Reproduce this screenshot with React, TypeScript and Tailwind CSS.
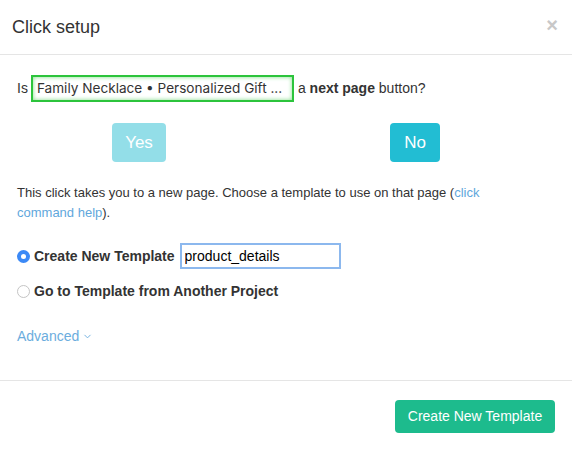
import { ChevronDown } from 'lucide-react';

const font = { fontFamily: '"Liberation Sans", Arial, sans-serif' };

function Radio({ checked }: { checked: boolean }) {
  return checked ? (
    <span className="flex h-[13px] w-[13px] items-center justify-center rounded-full bg-[#3b89f6]">
      <span className="h-[5px] w-[5px] rounded-full bg-white" />
    </span>
  ) : (
    <span className="h-[13px] w-[13px] rounded-full border border-[#c4c4c4] bg-white" />
  );
}

export default function App() {
  return (
    <div className="h-[450px] w-[572px] bg-white text-[14px] text-[#333]" style={font}>
      {/* Header */}
      <div className="flex h-[55px] items-center justify-between border-b border-[#e5e5e5] pl-3 pr-[14px]">
        <h2 className="text-[18px] leading-none text-[#333]">Click setup</h2>
        <span className="-mt-[5px] text-[20px] font-bold leading-none text-[#c8c8c8]">×</span>
      </div>

      {/* Body */}
      <div className="px-[17px] pb-[34px]">
        <div className="mt-[20px] flex h-[27px] items-center">
          <span>Is</span>
          <span
            className="ml-[3px] flex h-[27px] w-[263px] items-center overflow-hidden whitespace-nowrap border-2 border-[#2cc43c] px-[4px] text-[13.6px] text-[#333] shadow-[inset_0_0_4px_#7fdc86]"
            style={{ fontFamily: 'Inter, "Liberation Sans", sans-serif' }}
          >
            Family Necklace • Personalized Gift ...
          </span>
          <span className="ml-[4px]">
            a <b>next page</b> button?
          </span>
        </div>

        <div className="mt-[21px] flex h-[39px]">
          <button className="ml-[95px] h-[39px] w-[54px] rounded-[4px] bg-[#93dee8] text-[17px] text-white">Yes</button>
          <button className="ml-[224px] h-[39px] w-[50px] rounded-[4px] bg-[#22bdd3] text-[17px] text-white">No</button>
        </div>

        <p className="mt-[21px] w-[500px] text-[13px] leading-5">
          This click takes you to a new page. Choose a template to use on that page (
          <a className="text-[#5fa7dc]">click command help</a>).
        </p>

        <div className="mt-[20px] flex h-[26px] items-center">
          <Radio checked />
          <span className="ml-[4px] font-bold">Create New Template</span>
          <input
            readOnly
            value="product_details"
            className="ml-[5px] h-[26px] w-[161px] border-2 border-[#8cb8ee] px-[3px] text-[14px] text-black outline-none"
          />
        </div>

        <div className="mt-[12px] flex h-[20px] items-center">
          <Radio checked={false} />
          <span className="ml-[4px] font-bold">Go to Template from Another Project</span>
        </div>

        <div className="mt-[25px] flex h-[20px] items-center text-[#6badde]">
          <span>Advanced</span>
          <ChevronDown size={11} className="ml-[3px] mt-[1px]" strokeWidth={2} />
        </div>
      </div>

      {/* Footer */}
      <div className="flex justify-end border-t border-[#e5e5e5] pr-[17px] pt-[19px]">
        <button className="h-[33px] w-[160px] rounded-[4px] bg-[#1dbb8d] text-[14px] text-white">Create New Template</button>
      </div>
    </div>
  );
}
